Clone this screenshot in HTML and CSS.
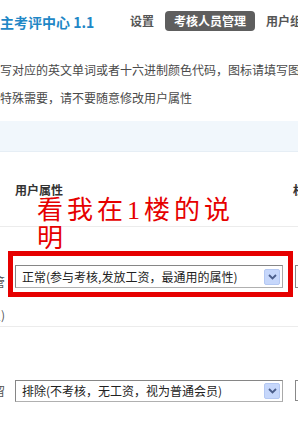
FILE: index.html
```html
<!DOCTYPE html>
<html lang="zh-CN">
<head>
<meta charset="utf-8">
<title>考核人员管理</title>
<link rel="stylesheet" href="styles.css">
</head>
<body>
<div class="page">
  <header class="topbar">
    <h1 class="title">主考评中心 1.1</h1>
    <nav class="tabs">
      <a class="tab">设置</a>
      <a class="tab active">考核人员管理</a>
      <a class="tab">用户组</a>
    </nav>
  </header>

  <div class="tips">
    <p>写对应的英文单词或者十六进制颜色代码，图标请填写图标文件名</p>
    <p>特殊需要，请不要随意修改用户属性</p>
  </div>

  <div class="band"></div>

  <div class="grid">
    <div class="row head">
      <div class="c1"></div>
      <div class="c2">用户属性</div>
      <div class="c3">权限</div>
    </div>

    <div class="row r1">
      <div class="c1">
        <span class="line l1">主管</span>
        <span class="line l2">(管理员)</span>
      </div>
      <div class="c2">
        <div class="select">
          <span class="val">正常(参与考核,发放工资，最通用的属性)</span>
          <span class="btn"><svg width="9" height="6" viewBox="0 0 9 6"><path d="M1 1 L4.5 4.5 L8 1" fill="none" stroke="#4a5d8a" stroke-width="1.8"/></svg></span>
        </div>
      </div>
      <div class="c3"><div class="box"></div></div>
    </div>

    <div class="row r2">
      <div class="c1">
        <span class="line l3">留</span>
      </div>
      <div class="c2">
        <div class="select">
          <span class="val">排除(不考核，无工资，视为普通会员)</span>
          <span class="btn"><svg width="9" height="6" viewBox="0 0 9 6"><path d="M1 1 L4.5 4.5 L8 1" fill="none" stroke="#4a5d8a" stroke-width="1.8"/></svg></span>
        </div>
      </div>
      <div class="c3"><div class="box"></div></div>
    </div>
  </div>

  <div class="note">看我在1楼的说明</div>
  <div class="redbox"></div>
</div>
</body>
</html>
```

FILE: styles.css
```css
html, body {
  margin: 0;
  padding: 0;
  background: #fff;
}
body {
  width: 298px;
  height: 427px;
  overflow: hidden;
  font-family: "Noto Sans CJK SC", "Liberation Sans", sans-serif;
  font-size: 12px;
  color: #444;
}
.page {
  position: relative;
  width: 298px;
  height: 427px;
  overflow: hidden;
}
.topbar {
  display: flex;
  align-items: center;
  height: 42px;
  white-space: nowrap;
}
.title {
  flex: 0 0 121px;
  margin: 0;
  font-size: 14px;
  line-height: 20px;
  font-weight: bold;
  color: #1f87c6;
  position: relative;
  top: 1px;
}
.tabs {
  display: flex;
  gap: 2px;
}
.tab {
  display: block;
  padding: 0 9px;
  height: 20px;
  line-height: 20px;
  border-radius: 4px;
  font-weight: bold;
  color: #555;
}
.tab.active {
  background: #5e5e5e;
  color: #fff;
}
.tips {
  margin: 14px 0 9px;
  white-space: nowrap;
}
.tips p {
  margin: 0;
  line-height: 28px;
  color: #4a4a4a;
}
.band {
  height: 30px;
  background: #f1f7fc;
  border-bottom: 1px solid #e6eef5;
}
.grid {
  width: 520px;
  margin-left: -60px;
}
.row {
  display: grid;
  grid-template-columns: 75px 278px 1fr;
  border-bottom: 1px solid #ececec;
}
.c1 {
  text-align: right;
  padding-right: 10px;
  white-space: nowrap;
}
.head {
  padding-top: 29px;
  box-sizing: border-box;
  height: 75px;
  line-height: 18px;
  font-weight: bold;
  color: #333;
}
.r1 {
  height: 100px;
  box-sizing: border-box;
}
.r2 {
  height: 140px;
  border-bottom: none;
}
.line {
  display: block;
  line-height: 20px;
  color: #555;
}
.l1 { margin-top: 45px; }
.l2 { margin-top: 13px; }
.l3 { margin-top: 54px; }
.r1 .c2, .r1 .c3 { padding-top: 38px; }
.r2 .c2, .r2 .c3 { padding-top: 53px; }
.select {
  box-sizing: border-box;
  width: 268px;
  height: 23px;
  border: 1px solid #868686;
  border-right-color: #a9a9a9;
  border-bottom-color: #b0b0b0;
  display: flex;
  align-items: center;
  justify-content: space-between;
  padding: 0 2px 0 6px;
  background: #fff;
}
.r2 .select { height: 22px; }
.val {
  color: #222;
  white-space: nowrap;
  line-height: 16px;
}
.btn {
  box-sizing: border-box;
  width: 16px;
  height: 16px;
  background: #c6d7fb;
  border: 1px solid #b4c8f3;
  border-radius: 2px;
  display: flex;
  align-items: center;
  justify-content: center;
}
.c3 {
  color: #333;
}
.head .c3 { font-weight: bold; }
.box {
  margin-left: 2px;
  height: 23px;
  box-sizing: border-box;
  border: 1px solid #888;
  border-right: none;
}
.r2 .box { height: 21px; }
.note {
  position: absolute;
  left: 37px;
  top: 197px;
  width: 210px;
  font-family: "Liberation Serif", "Noto Sans CJK SC", serif;
  font-size: 26px;
  line-height: 28px;
  letter-spacing: 4px;
  color: #e60000;
}
.redbox {
  position: absolute;
  left: 8px;
  top: 251px;
  width: 285px;
  height: 46px;
  box-sizing: border-box;
  border: 5px solid #e60000;
}
```
